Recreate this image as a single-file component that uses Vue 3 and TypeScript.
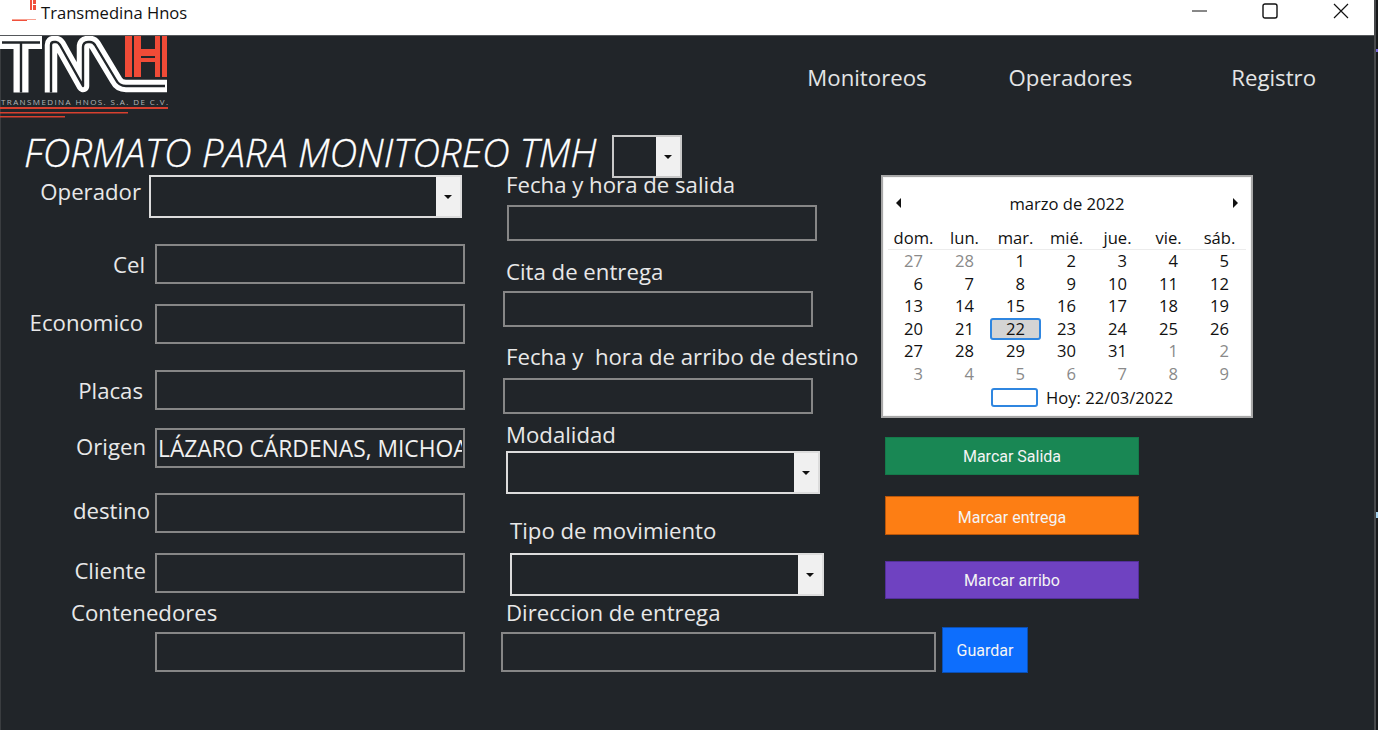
<script setup lang="ts">
interface Row {
  key: string
  label: string
  value?: string
  combo?: boolean
}

const leftRows: Row[] = [
  { key: 'operador', label: 'Operador', combo: true },
  { key: 'cel', label: 'Cel' },
  { key: 'economico', label: 'Economico' },
  { key: 'placas', label: 'Placas' },
  { key: 'origen', label: 'Origen', value: 'LÁZARO CÁRDENAS, MICHOACÁN' },
  { key: 'destino', label: 'destino' },
  { key: 'cliente', label: 'Cliente' },
]

const midRows: Row[] = [
  { key: 'salida', label: 'Fecha y hora de salida' },
  { key: 'cita', label: 'Cita de entrega' },
  { key: 'arribo', label: 'Fecha y  hora de arribo de destino' },
  { key: 'modalidad', label: 'Modalidad', combo: true },
  { key: 'tipo', label: 'Tipo de movimiento', combo: true },
]

const dayNames = ['dom.', 'lun.', 'mar.', 'mié.', 'jue.', 'vie.', 'sáb.']

// marzo 2022 grid, starts on the last days of february
const days: { n: number; muted: boolean }[] = []
for (const n of [27, 28]) days.push({ n, muted: true })
for (let n = 1; n <= 31; n++) days.push({ n, muted: false })
for (let n = 1; n <= 9; n++) days.push({ n, muted: true })
</script>

<template>
  <div class="screen">
    <div class="window">
      <header class="titlebar">
        <svg class="app-icon" width="26" height="22" viewBox="0 0 26 22">
          <rect x="18" y="0" width="6" height="10" fill="#f0503c" />
          <rect x="20" y="0" width="1" height="10" fill="#fff" />
          <rect x="20" y="4" width="4" height="1" fill="#fff" />
          <rect x="0" y="19" width="24" height="1" fill="#f8a090" />
          <rect x="0" y="20" width="15" height="1" fill="#f0503c" />
        </svg>
        <span class="app-name">Transmedina Hnos</span>
        <div class="win-controls">
          <svg width="16" height="16" viewBox="0 0 16 16" class="win-min"><path d="M0 8H15" stroke="#111" stroke-width="1" fill="none" /></svg>
          <svg width="16" height="16" viewBox="0 0 16 16" class="win-max"><rect x="1" y="1" width="14" height="14" rx="2" stroke="#111" stroke-width="1.4" fill="none" /></svg>
          <svg width="16" height="16" viewBox="0 0 16 16" class="win-close"><path d="M1 1L15 15M15 1L1 15" stroke="#111" stroke-width="1.2" fill="none" /></svg>
        </div>
      </header>

      <main class="content">
        <div class="topbar">
          <svg class="logo" width="170" height="85" viewBox="0 0 170 85">
            <g fill="none" stroke-linejoin="round">
              <g stroke="#fff">
                <path d="M0 6.5H42" stroke-width="13" />
                <path d="M21 6.5V56.5" stroke-width="15" />
                <path d="M51 56.5V9Q51 6 54 6L56 6Q58 6 60 9L83 50V11Q83 6 88 6H90Q93 6 95 9L116 44Q119 50 126 50H167" stroke-width="12.5" />
              </g>
              <g stroke="#212529" stroke-width="2.4">
                <path d="M2 6.5H40M21 7V56.5" />
                <path d="M51 56.5V9Q51 6 54 6L56 6Q58 6 60 9L83 50V11Q83 6 88 6H90Q93 6 95 9L116 44Q119 50 126 50H165" />
              </g>
            </g>
            <g fill="#f04b37">
              <rect x="125" y="0" width="7" height="41" />
              <rect x="134" y="0" width="7" height="41" />
              <rect x="155" y="0" width="5" height="41" />
              <rect x="162" y="0" width="5" height="41" />
              <rect x="141" y="13" width="14" height="7" />
              <rect x="141" y="22" width="14" height="4" />
            </g>
            <text x="1" y="68.5" class="logo-text">TRANSMEDINA HNOS. S.A. DE C.V.</text>
            <rect x="0" y="71" width="168" height="2" fill="#d8402f" />
            <rect x="0" y="76" width="128" height="1.5" fill="#d8402f" />
            <rect x="0" y="80" width="65" height="1.5" fill="#d8402f" />
          </svg>
          <nav class="nav">
            <a class="nav-link">Monitoreos</a>
            <a class="nav-link">Operadores</a>
            <a class="nav-link">Registro</a>
          </nav>
        </div>

        <div class="title-row">
          <h1 class="title">FORMATO PARA MONITOREO TMH</h1>
          <div class="combo combo-small"><span class="combo-btn"><i class="caret" /></span></div>
        </div>

        <div class="upper">
          <section class="left-col">
            <div v-for="row in leftRows" :key="row.key" class="left-row" :class="row.key">
              <label class="left-label">{{ row.label }}</label>
              <div v-if="row.combo" class="combo combo-wide"><span class="combo-btn"><i class="caret" /></span></div>
              <input v-else class="field" type="text" :value="row.value ?? ''">
            </div>
          </section>

          <section class="mid-col">
            <div v-for="row in midRows" :key="row.key" class="mid-row" :class="row.key">
              <label class="mid-label">{{ row.label }}</label>
              <div v-if="row.combo" class="combo combo-wide"><span class="combo-btn"><i class="caret" /></span></div>
              <input v-else class="field mid-field" type="text">
            </div>
          </section>

          <section class="right-col">
            <div class="calendar">
              <div class="cal-head">
                <i class="arrow arrow-left" />
                <span>marzo de 2022</span>
                <i class="arrow arrow-right" />
              </div>
              <div class="cal-names">
                <span v-for="d in dayNames" :key="d">{{ d }}</span>
              </div>
              <div class="cal-days">
                <span
                  v-for="(d, i) in days"
                  :key="i"
                  class="cal-day"
                  :class="{ muted: d.muted, today: !d.muted && d.n === 22 }"
                >{{ d.n }}</span>
              </div>
              <div class="cal-foot">
                <i class="today-box" />
                <span>Hoy: 22/03/2022</span>
              </div>
            </div>
            <button class="btn btn-green" type="button">Marcar Salida</button>
            <button class="btn btn-orange" type="button">Marcar entrega</button>
            <button class="btn btn-purple" type="button">Marcar arribo</button>
          </section>
        </div>

        <div class="lower">
          <div class="lower-left">
            <label class="lower-label contenedores">Contenedores</label>
            <input class="field contenedores-field" type="text">
          </div>
          <div class="lower-mid">
            <label class="lower-label direccion">Direccion de entrega</label>
            <div class="direccion-row">
              <input class="field direccion-field" type="text">
              <button class="btn-save" type="button">Guardar</button>
            </div>
          </div>
        </div>
      </main>
    </div>
    <aside class="edge">
      <i class="edge-purple" />
      <i class="edge-blue" />
    </aside>
  </div>
</template>

<style scoped>
.screen {
  display: flex;
  width: 1378px;
  height: 730px;
  overflow: hidden;
  font-family: "Open Sans", "Noto Sans", sans-serif;
}
.window {
  width: 1374px;
  display: flex;
  flex-direction: column;
}
.edge {
  position: relative;
  width: 4px;
  background: #17191b;
  border-left: 2px solid #47494b;
  box-sizing: border-box;
}
.edge-purple {
  position: absolute;
  top: 49px;
  left: 0;
  width: 2px;
  height: 3px;
  background: #7a6ad8;
}
.edge-blue {
  position: absolute;
  top: 512px;
  left: 0;
  width: 2px;
  height: 6px;
  background: #a8d4f0;
}

/* title bar */
.titlebar {
  flex: none;
  height: 35px;
  background: #fff;
  display: flex;
  align-items: flex-start;
  padding-left: 12px;
  border-bottom: 1px solid #55585b;
}
.app-icon {
  flex: none;
}
.app-name {
  margin-left: 3px;
  font-size: 16.6px;
  line-height: 26px;
  color: #111;
}
.win-controls {
  margin-left: auto;
  display: flex;
  padding: 3px 25px 0 0;
}
.win-min {
  margin-right: 54px;
}
.win-max {
  margin-right: 55px;
}

.content {
  flex: 1;
  background: #212529;
  border-left: 1px solid #3a3d40;
  color: #e8e8e8;
}

/* logo and menu */
.topbar {
  display: flex;
  height: 99px;
}
.logo {
  margin-left: -1px;
  flex: none;
}
.logo-text {
  font-size: 8px;
  letter-spacing: 1.4px;
  fill: #b4b6b8;
  font-family: "Open Sans", sans-serif;
}
.nav {
  margin-left: auto;
  display: flex;
  align-items: flex-start;
  padding: 27px 58px 0 0;
}
.nav-link {
  font-size: 22.2px;
  line-height: 30px;
  color: #e4e5e6;
}
.nav-link:nth-child(1) {
  margin-right: 82px;
}
.nav-link:nth-child(2) {
  margin-right: 99px;
}

/* heading */
.title-row {
  display: flex;
  align-items: flex-start;
  height: 40px;
  padding-left: 23px;
}
.title {
  margin: -2px 0 0;
  font-size: 38.6px;
  line-height: 38px;
  font-weight: 300;
  font-style: italic;
  color: #fff;
  -webkit-text-stroke: 0.3px #fff;
  white-space: nowrap;
}
.combo {
  display: flex;
  justify-content: flex-end;
  box-sizing: border-box;
  border: 2px solid #dcdcdc;
  background: transparent;
}
.combo-small {
  flex: none;
  margin-left: 15px;
  width: 70px;
  height: 43px;
  border-color: #c8c8c8;
}
.combo-wide {
  width: 314px;
  height: 43px;
}
.operador .combo-wide {
  width: 313px;
}
.combo-btn {
  width: 24px;
  background: #f0f0f0;
  display: flex;
  align-items: center;
  justify-content: center;
}
.caret {
  width: 0;
  height: 0;
  border-left: 4px solid transparent;
  border-right: 4px solid transparent;
  border-top: 4px solid #111;
}

.field {
  display: block;
  box-sizing: border-box;
  width: 310px;
  height: 40px;
  padding: 0 1px;
  margin: 0;
  background: transparent;
  border: 2px solid #868686;
  color: #f0f0f0;
  font-family: inherit;
  font-size: 22.8px;
  outline: none;
}

.upper {
  display: grid;
  grid-template-columns: 499px 381px 1fr;
  height: 425px;
}

/* left column */
.left-row {
  display: flex;
  align-items: center;
}
.left-label {
  flex: none;
  box-sizing: border-box;
  width: 154px;
  text-align: right;
  font-size: 22.2px;
  line-height: 28px;
  white-space: nowrap;
}
.operador .left-label {
  width: 148px;
  padding: 0 8px 10px 0;
}
.cel {
  margin-top: 26px;
}
.cel .left-label {
  padding: 2px 10px 0 0;
}
.economico {
  margin-top: 20px;
}
.economico .left-label {
  padding: 0 12px 2px 0;
}
.placas {
  margin-top: 26px;
}
.placas .left-label {
  padding: 2px 12px 0 0;
}
.origen {
  margin-top: 18px;
}
.origen .left-label {
  padding: 0 9px 2px 0;
}
.destino {
  margin-top: 25px;
}
.destino .left-label {
  padding: 0 5px 4px 0;
}
.cliente {
  margin-top: 20px;
}
.cliente .left-label {
  padding: 0 9px 4px 0;
}

/* middle column */
.mid-label {
  display: block;
  font-size: 22.2px;
  line-height: 24px;
  white-space: pre;
}
.salida {
  margin: -2px 0 0 6px;
}
.salida .field {
  margin: 8px 0 0 1px;
  height: 36px;
}
.cita {
  margin: 19px 0 0 3px;
}
.cita .mid-label {
  margin-left: 3px;
}
.cita .field {
  margin-top: 7px;
  height: 36px;
}
.arribo {
  margin: 18px 0 0 3px;
}
.arribo .mid-label {
  margin-left: 3px;
}
.arribo .field {
  margin-top: 9px;
  height: 36px;
}
.modalidad {
  margin: 9px 0 0 6px;
}
.modalidad .combo {
  margin-top: 4px;
}
.tipo {
  margin: 25px 0 0 10px;
}
.tipo .combo {
  margin-top: 10px;
}

/* calendar */
.right-col {
  display: flex;
  flex-direction: column;
  align-items: flex-start;
}
.calendar {
  box-sizing: border-box;
  width: 372px;
  height: 243px;
  background: #fff;
  border: 2px solid #a8a8a8;
  outline: 1px solid #f4f4f4;
  outline-offset: -3px;
  color: #111;
  font-size: 16.6px;
  padding: 0 5px;
}
.cal-head {
  display: flex;
  align-items: center;
  justify-content: space-between;
  height: 20px;
  margin-top: 16px;
  padding: 0 8px;
}
.arrow {
  width: 0;
  height: 0;
  border-top: 5px solid transparent;
  border-bottom: 5px solid transparent;
}
.arrow-left {
  border-right: 5px solid #111;
}
.arrow-right {
  border-left: 5px solid #111;
}
.cal-names {
  display: grid;
  grid-template-columns: repeat(7, 51px);
  margin-top: 14px;
  height: 22px;
  line-height: 22px;
  text-align: center;
  border-bottom: 1px solid #ececec;
}
.cal-days {
  display: grid;
  grid-template-columns: repeat(7, 51px);
  grid-auto-rows: 22.5px;
  margin-top: 0;
}
.cal-day {
  box-sizing: border-box;
  text-align: right;
  line-height: 22px;
  padding-right: 16px;
}
.muted {
  color: #8a8a8a;
}
.today {
  background: #d4d4d4;
  border: 2px solid #2f86e0;
  border-radius: 3px;
  padding-right: 14px;
  line-height: 18px;
}
.cal-foot {
  display: flex;
  align-items: center;
  margin: 1px 0 0 103px;
  height: 22px;
}
.today-box {
  box-sizing: border-box;
  width: 47px;
  height: 19px;
  border: 2px solid #2f86e0;
  border-radius: 3px;
  margin-right: 8px;
}

/* buttons */
.btn {
  display: block;
  box-sizing: border-box;
  width: 254px;
  height: 38px;
  margin-left: 4px;
  padding: 0;
  font-family: Roboto, sans-serif;
  font-size: 16px;
  color: #f4f4f4;
  border: 1px solid transparent;
}
.btn-green {
  margin-top: 19px;
  background: #198754;
  border-color: #147a4a;
}
.btn-orange {
  margin-top: 21px;
  height: 39px;
  padding-top: 3px;
  background: #fd7e14;
  border-color: #b9560a;
}
.btn-purple {
  margin-top: 26px;
  background: #6f42c1;
  border-color: #53309a;
}

/* bottom row */
.lower {
  display: grid;
  grid-template-columns: 499px 1fr;
}
.lower-label {
  display: block;
  font-size: 22.2px;
  line-height: 26px;
}
.contenedores {
  margin-left: 70px;
}
.contenedores-field {
  margin: 6px 0 0 154px;
}
.direccion {
  margin-left: 6px;
}
.direccion-row {
  display: flex;
  align-items: flex-start;
  margin-top: 1px;
}
.direccion-field {
  width: 435px;
  margin: 5px 0 0 1px;
}
.btn-save {
  flex: none;
  box-sizing: border-box;
  width: 86px;
  height: 46px;
  margin-left: 6px;
  padding: 0;
  background: #0d6efd;
  border: 1px solid #0a4fb4;
  color: #f4f4f4;
  font-family: Roboto, sans-serif;
  font-size: 16px;
}
</style>
